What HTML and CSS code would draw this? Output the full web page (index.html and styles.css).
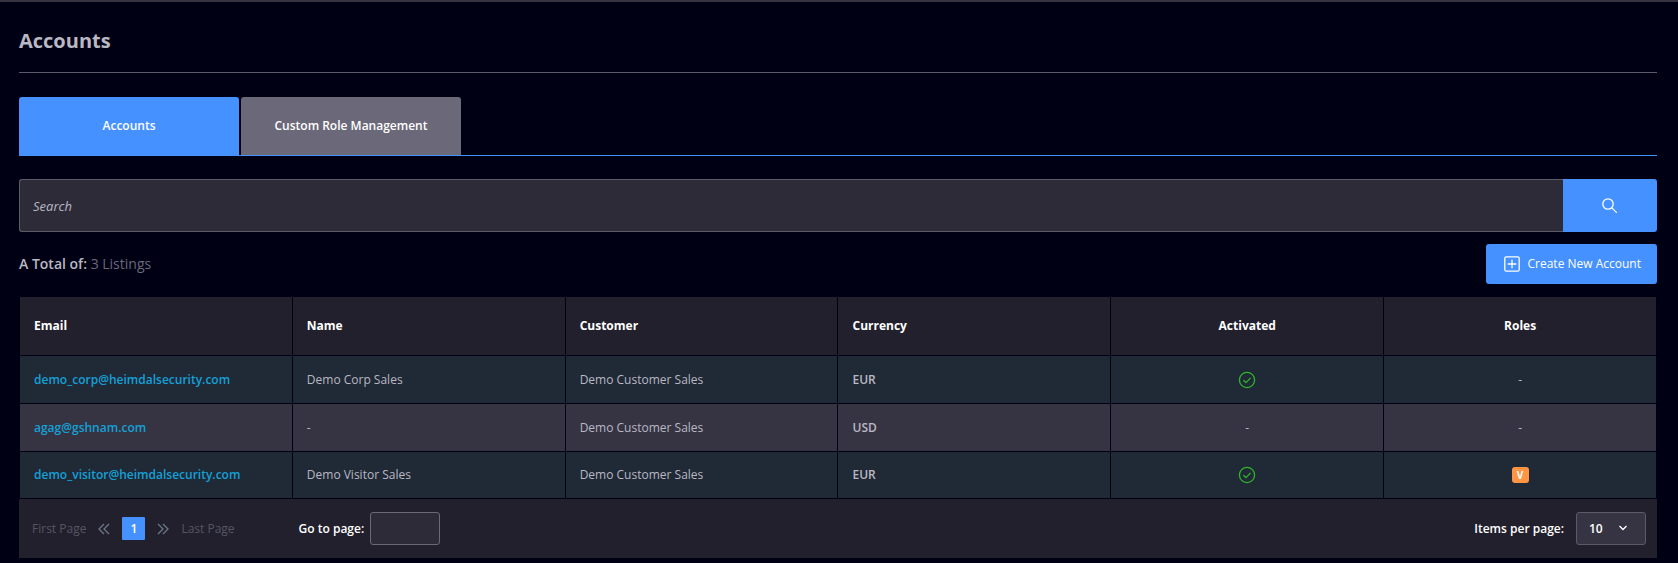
FILE: index.html
```html
<!DOCTYPE html>
<html lang="en">

<head>
    <meta charset="utf-8" />
    <title>Accounts</title>
    <meta name="viewport" content="width=device-width, initial-scale=1">
    <link rel="stylesheet" href="styles.css">
</head>

<body>
    <main class="page">
        <h1 class="page-title">Accounts</h1>

        <nav class="tabs">
            <a href="#accounts" class="tab active">Accounts</a>
            <a href="#roles" class="tab">Custom Role Management</a>
        </nav>

        <form class="search">
            <input type="text" class="search-input" placeholder="Search" aria-label="Search">
            <button type="button" class="search-button" aria-label="Search">
                <svg width="16" height="16" viewBox="0 0 16 16" fill="none" stroke="currentColor" stroke-width="1.3" stroke-linecap="round">
                    <circle cx="6" cy="6" r="5.2" />
                    <path d="M9.9 9.9L14.4 14.4" />
                </svg>
            </button>
        </form>

        <div class="toolbar">
            <p class="total"><b>A Total of:</b> 3 Listings</p>
            <button type="button" class="create-button">
                <svg width="16" height="16" viewBox="0 0 16 16" fill="none" stroke="currentColor" stroke-width="1.3" stroke-linecap="round">
                    <rect x="0.8" y="0.8" width="14.4" height="14.4" rx="1.5" />
                    <path d="M8 4.2V11.8M4.2 8H11.8" />
                </svg>
                Create New Account
            </button>
        </div>

        <table class="accounts">
            <thead>
                <tr>
                    <th>Email</th>
                    <th>Name</th>
                    <th>Customer</th>
                    <th>Currency</th>
                    <th class="center">Activated</th>
                    <th class="center">Roles</th>
                </tr>
            </thead>
            <tbody>
                <tr>
                    <td><a href="#" class="email">demo_corp@heimdalsecurity.com</a></td>
                    <td>Demo Corp Sales</td>
                    <td>Demo Customer Sales</td>
                    <td class="currency">EUR</td>
                    <td class="center">
                        <svg class="check" width="18" height="18" viewBox="0 0 18 18">
                            <circle cx="9" cy="9" r="7.6" />
                            <path d="M5.4 9.2L8 11.6L12.6 6.9" />
                        </svg>
                    </td>
                    <td class="center">-</td>
                </tr>
                <tr>
                    <td><a href="#" class="email">agag@gshnam.com</a></td>
                    <td>-</td>
                    <td>Demo Customer Sales</td>
                    <td class="currency">USD</td>
                    <td class="center">-</td>
                    <td class="center">-</td>
                </tr>
                <tr>
                    <td><a href="#" class="email">demo_visitor@heimdalsecurity.com</a></td>
                    <td>Demo Visitor Sales</td>
                    <td>Demo Customer Sales</td>
                    <td class="currency">EUR</td>
                    <td class="center">
                        <svg class="check" width="18" height="18" viewBox="0 0 18 18">
                            <circle cx="9" cy="9" r="7.6" />
                            <path d="M5.4 9.2L8 11.6L12.6 6.9" />
                        </svg>
                    </td>
                    <td class="center"><span class="role">V</span></td>
                </tr>
            </tbody>
        </table>

        <div class="pager">
            <div class="pages">
                <a href="#" class="page-link">First Page</a>
                <a href="#" class="page-arrow" aria-label="Previous page">
                    <svg width="12" height="12" viewBox="0 0 12 12">
                        <path d="M6 1L1 6L6 11M11 1L6 6L11 11" />
                    </svg>
                </a>
                <a href="#" class="page-number">1</a>
                <a href="#" class="page-arrow" aria-label="Next page">
                    <svg width="12" height="12" viewBox="0 0 12 12">
                        <path d="M1 1L6 6L1 11M6 1L11 6L6 11" />
                    </svg>
                </a>
                <a href="#" class="page-link">Last Page</a>
            </div>
            <div class="goto">
                <label for="goto">Go to page:</label>
                <input type="text" id="goto" class="goto-input">
            </div>
            <div class="per-page">
                <label for="perPage">Items per page:</label>
                <div class="select-wrap">
                    <select id="perPage" class="per-page-select">
                        <option>10</option>
                        <option>25</option>
                        <option>50</option>
                    </select>
                    <svg class="select-arrow" width="10" height="6" viewBox="0 0 10 6">
                        <path d="M1.5 1L5 4.4L8.5 1" />
                    </svg>
                </div>
            </div>
        </div>
    </main>
</body>

</html>
```
FILE: styles.css
```css
* {
    box-sizing: border-box;
}

body {
    margin: 0;
    background: #000014;
    color: #b9b8c3;
    font-family: "Open Sans", "Liberation Sans", sans-serif;
    font-size: 12px;
    line-height: 18px;
}

a {
    text-decoration: none;
}

button,
input,
select {
    font: inherit;
}

.page {
    border-top: 2px solid #363443;
    padding: 0 21px 5px 19px;
}

.page-title {
    margin: 0 0 24px;
    padding: 24px 0 16px;
    border-bottom: 1px solid #5c5a69;
    font-size: 20px;
    line-height: 30px;
    font-weight: 700;
}

.tabs {
    display: flex;
    gap: 2px;
    border-bottom: 1px solid #4591ff;
}

.tab {
    width: 220px;
    padding: 20px 10px;
    border-radius: 3px 3px 0 0;
    background: #6a6879;
    color: #fff;
    font-weight: 600;
    text-align: center;
}

.tab.active {
    background: #4591ff;
}

.search {
    display: flex;
    margin-top: 23px;
}

.search-input {
    flex: 1;
    height: 53px;
    padding: 0 13px;
    border: 1px solid #5c5a69;
    border-right: 0;
    border-radius: 3px 0 0 3px;
    background: #2d2b38;
    color: #b9b8c3;
    font-size: 13px;
}

.search-input::placeholder {
    color: #b9b8c3;
    font-style: italic;
}

.search-button {
    display: flex;
    align-items: center;
    justify-content: center;
    width: 94px;
    border: 0;
    border-radius: 0 3px 3px 0;
    background: #4591ff;
    color: #fff;
}

.toolbar {
    display: flex;
    align-items: center;
    justify-content: space-between;
    margin: 12px 0;
}

.total {
    margin: 0;
    color: #6a6879;
    font-size: 14px;
}

.total b {
    color: #b9b8c3;
    font-weight: 600;
}

.create-button {
    display: flex;
    align-items: center;
    gap: 8px;
    height: 40px;
    padding: 0 16px 0 18px;
    border: 0;
    border-radius: 3px;
    background: #4591ff;
    color: #fff;
}

.accounts {
    width: 100%;
    table-layout: fixed;
    border-collapse: collapse;
}

.accounts th,
.accounts td {
    height: 48px;
    padding: 0 14px;
    border: 1px solid #000014;
    text-align: left;
}

.accounts th {
    height: 59px;
    background: #22202d;
    color: #fff;
    font-weight: 700;
}

.accounts tbody tr {
    background: #202936;
}

.accounts tbody tr:nth-child(even) {
    background: #363443;
}

.accounts tbody tr:last-child td {
    height: 47px;
}

.accounts .center {
    text-align: center;
}

.accounts .currency,
.email {
    font-weight: 600;
}

.email {
    color: #15a0d6;
}

.check {
    display: block;
    margin: 0 auto;
    fill: none;
    stroke: #2fb52b;
    stroke-width: 1.3;
}

.role {
    display: block;
    width: 17px;
    margin: 0 auto;
    border-radius: 3px;
    background: #ff9443;
    color: #fff;
    font-size: 10px;
    line-height: 16px;
    font-weight: 700;
}

.pager {
    display: flex;
    align-items: center;
    padding: 13px 11px 13px 13px;
    background: #22202d;
    color: #fff;
    font-weight: 600;
}

.pages {
    display: flex;
    align-items: center;
    gap: 12px;
    margin-right: 64px;
}

.page-link {
    color: #555664;
    font-weight: 400;
}

.page-arrow {
    display: flex;
}

.page-arrow path {
    fill: none;
    stroke: #6c7688;
    stroke-width: 1.3;
}

.page-number {
    width: 23px;
    border-radius: 1px;
    background: #4591ff;
    color: #fff;
    line-height: 23px;
    text-align: center;
}

.goto,
.per-page {
    display: flex;
    align-items: center;
    gap: 6px;
}

.goto-input {
    width: 70px;
    height: 33px;
    border: 1px solid #6a6879;
    border-radius: 3px;
    background: #2d2b38;
    color: #fff;
}

.per-page {
    gap: 12px;
    margin-left: auto;
}

.select-wrap {
    position: relative;
}

.per-page-select {
    display: block;
    width: 70px;
    height: 33px;
    padding: 0 12px;
    appearance: none;
    border: 1px solid #5c5a69;
    border-radius: 3px;
    background: #363443;
    color: #fff;
}

/* chevron sits over the select */
.select-arrow {
    position: absolute;
    top: 13px;
    right: 18px;
    fill: none;
    stroke: #fff;
    stroke-width: 1.4;
    pointer-events: none;
}
```
